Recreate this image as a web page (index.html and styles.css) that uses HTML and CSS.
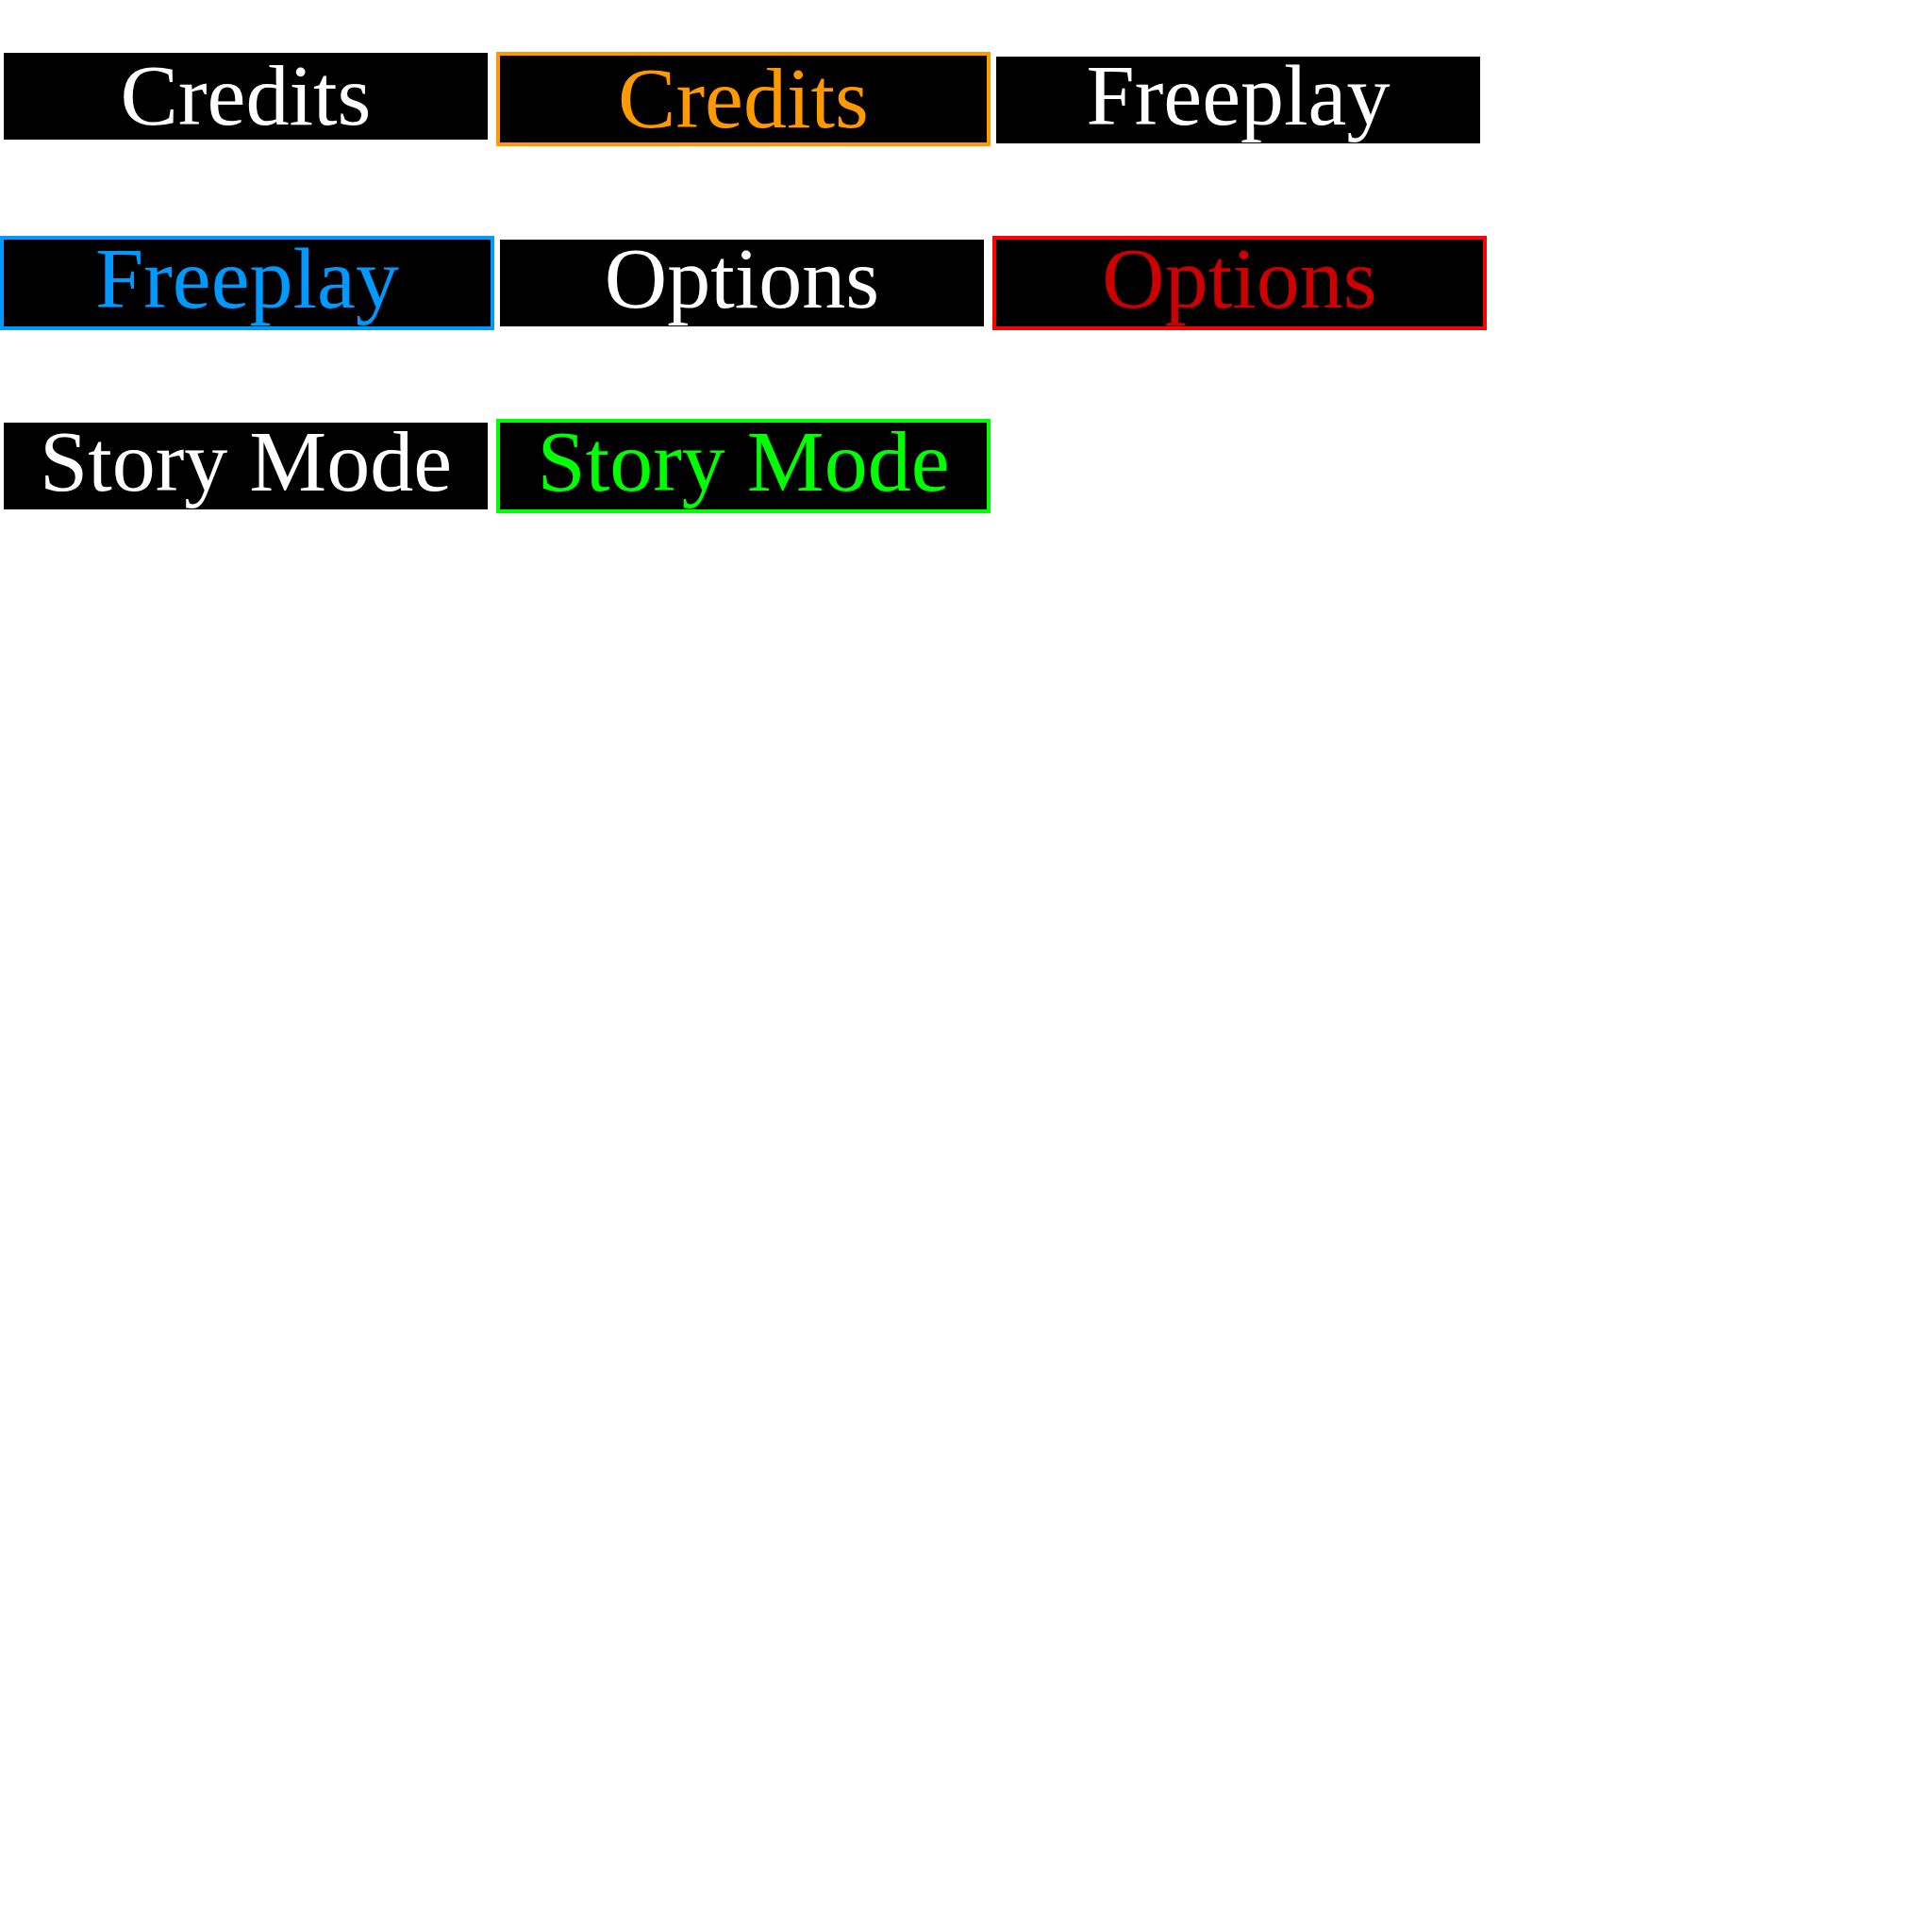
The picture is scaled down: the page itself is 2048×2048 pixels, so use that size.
FILE: index.html
```html
<!DOCTYPE html>
<html lang="en">
  <head>
    <meta charset="UTF-8" />
    <meta name="viewport" content="width=device-width, initial-scale=1.0" />
    <title>Menu Buttons</title>
    <link rel="stylesheet" href="styles.css">
  </head>
  <body>
    <div class="menu">
      <div class="button credits">Credits</div>
      <div class="button credits selected orange">Credits</div>
      <div class="button low">Freeplay</div>

      <div class="button selected blue">Freeplay</div>
      <div class="button mid">Options</div>
      <div class="button selected red">Options</div>

      <div class="button mid">Story Mode</div>
      <div class="button selected green">Story Mode</div>
    </div>
  </body>
</html>
```

FILE: styles.css
```css
body {
  margin: 0;
  background: #fff;
  font-family: "Liberation Serif", "Times New Roman", serif;
}
.menu {
  display: grid;
  grid-template-columns: repeat(3, 526px);
  row-gap: 94.5px;
  padding-top: 55px;
  align-items: start;
}
.button {
  width: 513px;
  height: 92px;
  margin-left: 4px;
  margin-top: 1px;
  background: #000;
  color: #fff;
  font-size: 92px;
  line-height: 83px;
  text-align: center;
  white-space: nowrap;
}
.button.credits {
  line-height: 91px;
}
.button.low {
  margin-top: 5px;
}
.button.mid {
  margin-top: 4px;
}
.selected {
  width: 516px;
  height: 92px;
  margin-left: 0;
  margin-top: 0;
  border: 4px solid;
}
.orange {
  color: #ff9900;
  border-color: #ff9900;
}
.blue {
  color: #0099ff;
  border-color: #0099ff;
}
.red {
  color: #cc0000;
  border-color: #ff0000;
}
.green {
  color: #00ff00;
  border-color: #00ff00;
}
```
